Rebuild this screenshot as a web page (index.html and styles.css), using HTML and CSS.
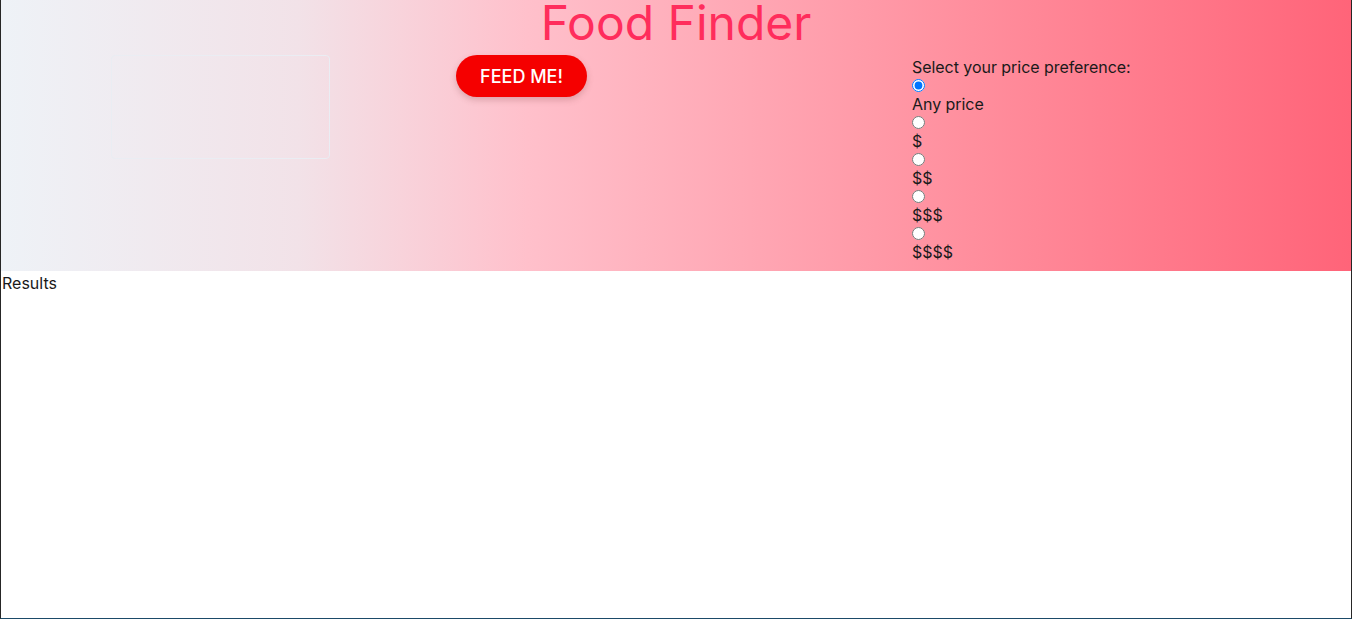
FILE: index.html
```html
<!DOCTYPE html>
<html lang="en">
<head>
<meta charset="utf-8">
<title>Food Finder</title>
<link rel="stylesheet" href="styles.css">
</head>
<body>
<div class="frame">
  <header class="hero">
    <h1 class="title">Food Finder</h1>
    <div class="controls">
      <div class="col col-box"><div class="placeholder"></div></div>
      <div class="col col-btn"><button class="feed-btn" type="button">FEED ME!</button></div>
      <div class="col col-price">
        <div class="price-label">Select your price preference:</div>
        <input class="radio" type="radio" name="price" checked>
        <div class="opt">Any price</div>
        <input class="radio" type="radio" name="price">
        <div class="opt">$</div>
        <input class="radio" type="radio" name="price">
        <div class="opt">$$</div>
        <input class="radio" type="radio" name="price">
        <div class="opt">$$$</div>
        <input class="radio" type="radio" name="price">
        <div class="opt">$$$$</div>
      </div>
    </div>
  </header>
  <section class="results">Results</section>
</div>
</body>
</html>
```
FILE: styles.css
```css
html, body {
  margin: 0;
  padding: 0;
  height: 100%;
}
body {
  font-family: Inter, "Noto Sans", sans-serif;
  font-size: 16px;
  color: #1a1a1a;
  background: #ffffff;
}
.frame {
  box-sizing: border-box;
  height: 619px;
  border-left: 1px solid #262626;
  border-right: 1px solid #262626;
  border-bottom: 1px solid #1b4a68;
  display: flex;
  flex-direction: column;
}
.hero {
  height: 271px;
  background: linear-gradient(to right, #eef2f7 0%, #f2e2e8 22%, #ffc0cb 39%, #ff8e9d 72%, #ff6479 100%);
  display: flex;
  flex-direction: column;
}
.title {
  margin: 0;
  font-size: 48px;
  font-weight: 400;
  line-height: 46px;
  text-align: center;
  color: #ff2d5c;
}
.controls {
  display: flex;
  margin-top: 9px;
}
.col-box {
  width: 455px;
  padding-left: 110px;
  box-sizing: border-box;
}
.placeholder {
  width: 219px;
  height: 104px;
  box-sizing: border-box;
  border: 1px solid #eaedf3;
  border-radius: 4px;
}
.col-btn {
  width: 456px;
}
.feed-btn {
  width: 131px;
  height: 42px;
  border: none;
  border-radius: 21px;
  background: #f50000;
  color: #ffffff;
  font-family: Inter, "Noto Sans", sans-serif;
  font-size: 18px;
  font-weight: 500;
  padding: 0;
  box-shadow: 0 3px 6px rgba(120, 60, 60, 0.25);
  cursor: pointer;
}
.col-price {
  display: flex;
  flex-direction: column;
  align-items: flex-start;
  padding-top: 3px;
  letter-spacing: -0.05px;
}
.price-label, .opt {
  line-height: 19px;
  height: 19px;
}
.radio {
  width: 13px;
  height: 13px;
  margin: 2px 0 3px 0;
}
.results {
  flex: 1;
  padding: 3px 0 0 1px;
  line-height: 19px;
}
```
